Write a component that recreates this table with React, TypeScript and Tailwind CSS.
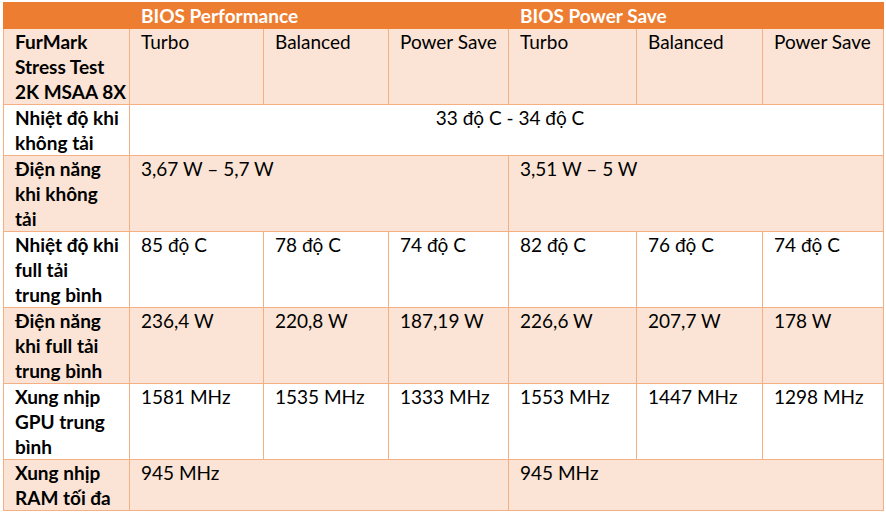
import React from 'react'

const border = 'border border-[#f4b083]'
const head = 'font-bold'
const cell = `${border} align-top pl-[11px] pr-1 whitespace-nowrap`

const rows: { label: React.ReactNode; tint: boolean; cells: { text: string; span?: number; center?: boolean }[] }[] = [
    {
        label: <>FurMark<br />Stress Test<br />2K MSAA 8X</>,
        tint: true,
        cells: [{ text: 'Turbo' }, { text: 'Balanced' }, { text: 'Power Save' }, { text: 'Turbo' }, { text: 'Balanced' }, { text: 'Power Save' }],
    },
    {
        label: <>Nhiệt độ khi<br />không tải</>,
        tint: false,
        cells: [{ text: '33 độ C - 34 độ C', span: 6, center: true }],
    },
    {
        label: <>Điện năng<br />khi không<br />tải</>,
        tint: true,
        cells: [{ text: '3,67 W – 5,7 W', span: 3 }, { text: '3,51 W – 5 W', span: 3 }],
    },
    {
        label: <>Nhiệt độ khi<br />full tải<br />trung bình</>,
        tint: false,
        cells: [{ text: '85 độ C' }, { text: '78 độ C' }, { text: '74 độ C' }, { text: '82 độ C' }, { text: '76 độ C' }, { text: '74 độ C' }],
    },
    {
        label: <>Điện năng<br />khi full tải<br />trung bình</>,
        tint: true,
        cells: [{ text: '236,4 W' }, { text: '220,8 W' }, { text: '187,19 W' }, { text: '226,6 W' }, { text: '207,7 W' }, { text: '178 W' }],
    },
    {
        label: <>Xung nhịp<br />GPU trung<br />bình</>,
        tint: false,
        cells: [{ text: '1581 MHz' }, { text: '1535 MHz' }, { text: '1333 MHz' }, { text: '1553 MHz' }, { text: '1447 MHz' }, { text: '1298 MHz' }],
    },
    {
        label: <>Xung nhịp<br />RAM tối đa</>,
        tint: true,
        cells: [{ text: '945 MHz', span: 3 }, { text: '945 MHz', span: 3 }],
    },
]

const App = () => {
    return (
        <div className="w-[886px] h-[512px] bg-white pt-[2px] pl-[3px] font-['Lato','Open_Sans',sans-serif] text-[19px] leading-[25px] text-black">
            <table className="table-fixed border-collapse w-[880px]">
                <colgroup>
                    <col className="w-[126px]" />
                    <col className="w-[134px]" />
                    <col className="w-[125px]" />
                    <col className="w-[120px]" />
                    <col className="w-[128px]" />
                    <col className="w-[126px]" />
                    <col className="w-[121px]" />
                </colgroup>
                <tbody>
                    <tr className="bg-[#ed7d31] text-white font-bold">
                        <td className="border border-[#ed7d31] h-[26px]"></td>
                        <td colSpan={3} className="border border-[#ed7d31] pl-[11px] align-top">BIOS Performance</td>
                        <td colSpan={3} className="border border-[#ed7d31] pl-[11px] align-top">BIOS Power Save</td>
                    </tr>
                    {rows.map((row, i) => (
                        <tr key={i} className={row.tint ? 'bg-[#fbe4d5]' : 'bg-white'}>
                            <td className={`${cell} ${head}`}>{row.label}</td>
                            {row.cells.map((c, j) => (
                                <td key={j} colSpan={c.span} className={`${cell} ${c.center ? 'text-center pl-0 pr-0' : ''}`}>
                                    {c.text}
                                </td>
                            ))}
                        </tr>
                    ))}
                </tbody>
            </table>
        </div>
    )
}

export default App
